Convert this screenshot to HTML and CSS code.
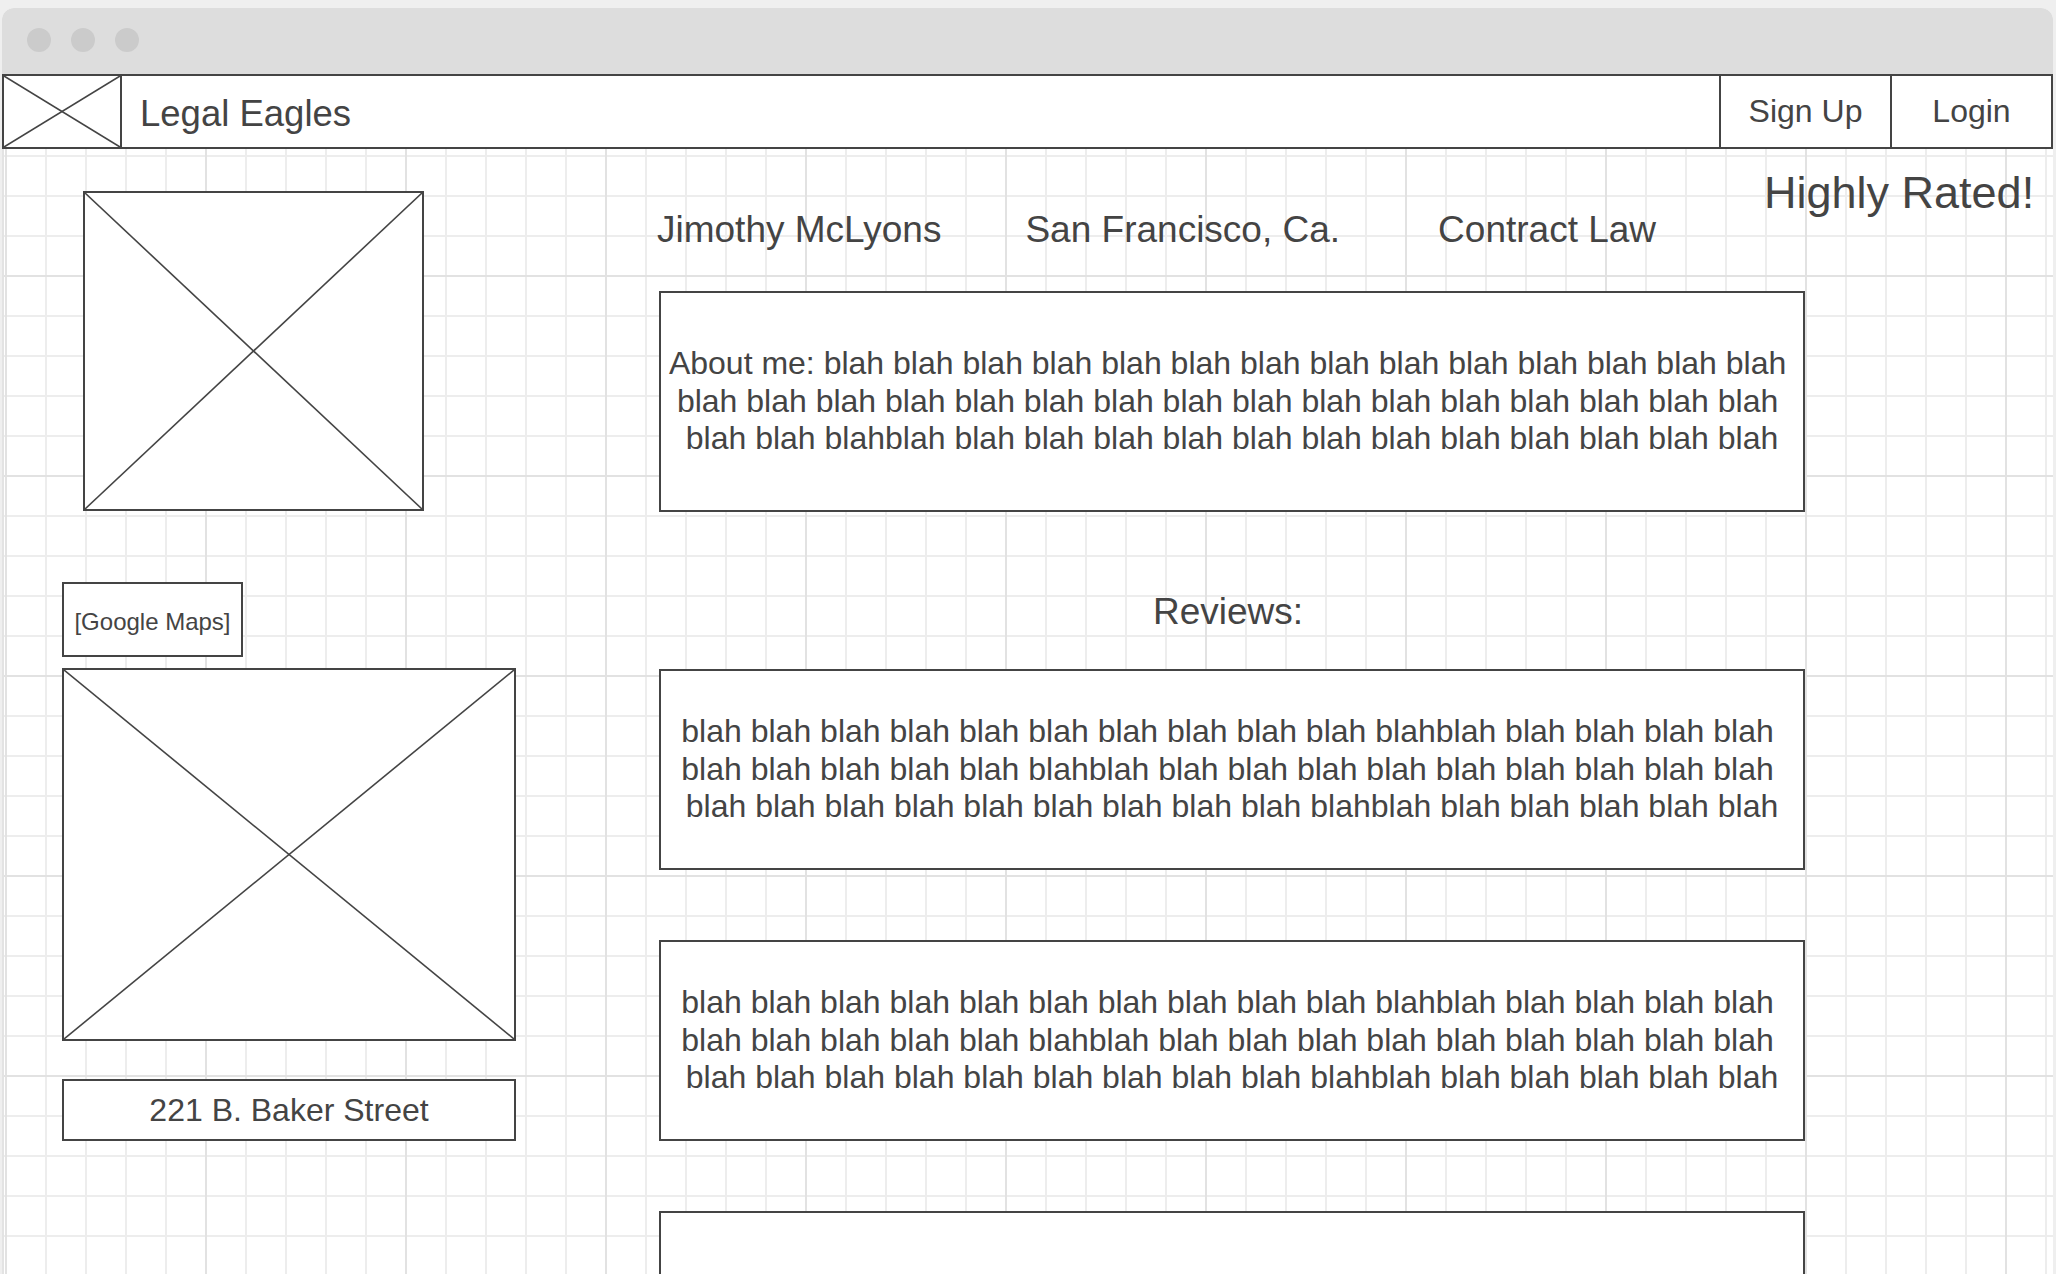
FILE: index.html
```html
<!DOCTYPE html>
<html lang="en">
<head>
    <meta charset="UTF-8">
    <meta name="viewport" content="width=device-width, initial-scale=1.0">
    <title>Legal Eagles - Jimothy McLyons</title>
    <link rel="stylesheet" href="styles.css">
</head>
<body>
    <div class="window">
        <div class="titlebar">
            <span class="dot"></span>
            <span class="dot"></span>
            <span class="dot"></span>
        </div>
        <header class="nav">
            <div class="logo">
                <svg class="cross" viewBox="0 0 100 100" preserveAspectRatio="none"><line x1="0" y1="0" x2="100" y2="100"/><line x1="100" y1="0" x2="0" y2="100"/></svg>
            </div>
            <div class="brand">Legal Eagles</div>
            <a class="nav-btn signup" href="#">Sign Up</a>
            <a class="nav-btn login" href="#">Login</a>
        </header>
        <main class="canvas">
            <aside class="side">
                <div class="box photo">
                    <svg class="cross" viewBox="0 0 100 100" preserveAspectRatio="none"><line x1="0" y1="0" x2="100" y2="100"/><line x1="100" y1="0" x2="0" y2="100"/></svg>
                </div>
                <div class="box maps-label">[Google Maps]</div>
                <div class="box map">
                    <svg class="cross" viewBox="0 0 100 100" preserveAspectRatio="none"><line x1="0" y1="0" x2="100" y2="100"/><line x1="100" y1="0" x2="0" y2="100"/></svg>
                </div>
                <div class="box address">221 B. Baker Street</div>
            </aside>

            <div class="facts">
                <span>Jimothy McLyons</span>
                <span>San Francisco, Ca.</span>
                <span class="practice">Contract Law</span>
            </div>

            <div class="rating">Highly Rated!</div>

            <section class="profile">
                <div class="box blurb">
                    <p>About me: blah blah blah blah blah blah blah blah blah blah blah blah blah blah blah blah blah blah blah blah blah blah blah blah blah blah blah blah blah blah blah blah blahblah blah blah blah blah blah blah blah blah blah blah blah blah</p>
                </div>

                <h2 class="reviews-title">Reviews:</h2>

                <div class="box blurb review">
                    <p>blah blah blah blah blah blah blah blah blah blah blahblah blah blah blah blah blah blah blah blah blah blahblah blah blah blah blah blah blah blah blah blah blah blah blah blah blah blah blah blah blah blahblah blah blah blah blah blah</p>
                </div>
                <div class="box blurb review">
                    <p>blah blah blah blah blah blah blah blah blah blah blahblah blah blah blah blah blah blah blah blah blah blahblah blah blah blah blah blah blah blah blah blah blah blah blah blah blah blah blah blah blah blahblah blah blah blah blah blah</p>
                </div>
                <div class="box blurb review"></div>
            </section>
        </main>
    </div>
</body>
</html>
```

FILE: styles.css
```css
* {
    box-sizing: border-box;
}

html, body {
    height: 100%;
}

body {
    margin: 0;
    padding: 8px 3px 0 2px;
    background: #efefef;
    font-family: "Liberation Sans", Arial, sans-serif;
    color: #444;
    overflow: hidden;
}

.window {
    height: 100%;
    display: flex;
    flex-direction: column;
    background: #fff;
    border-radius: 12px 12px 0 0;
}

.titlebar {
    flex: none;
    height: 66px;
    display: flex;
    align-items: center;
    gap: 20px;
    padding: 0 0 3px 25px;
    background: #dddddd;
    border-radius: 12px 12px 0 0;
}

.dot {
    width: 24px;
    height: 24px;
    border-radius: 50%;
    background: #cbcbcb;
}

.nav {
    flex: none;
    height: 75px;
    display: flex;
    border: 2px solid #444;
    background: #fff;
}

.logo {
    width: 118px;
    border-right: 2px solid #444;
}

.cross {
    display: block;
    width: 100%;
    height: 100%;
}

.cross line {
    stroke: #444;
    stroke-width: 1.6;
    vector-effect: non-scaling-stroke;
}

.brand {
    flex: 1;
    display: flex;
    align-items: center;
    padding: 4px 0 0 18px;
    font-size: 36.5px;
}

.nav-btn {
    display: flex;
    align-items: center;
    justify-content: center;
    border-left: 2px solid #444;
    font-size: 32px;
    color: #444;
    text-decoration: none;
}

.signup {
    width: 171px;
}

.login {
    width: 161px;
}

/* wireframe canvas with the grid paper behind it */
.canvas {
    flex: 1;
    min-height: 0;
    overflow: hidden;
    display: grid;
    grid-template-columns: 58px 454px 143px 1108px 38px 1fr;
    grid-template-rows: auto 1fr;
    align-items: start;
    padding-top: 19px;
    border-left: 2px solid #e3e3e3;
    background-color: #fff;
    background-image:
        linear-gradient(90deg, #e2e2e2 2px, transparent 2px),
        linear-gradient(180deg, #e2e2e2 2px, transparent 2px),
        linear-gradient(90deg, #ededed 2px, transparent 2px),
        linear-gradient(180deg, #ededed 2px, transparent 2px);
    background-size: 200px 200px, 200px 200px, 40px 40px, 40px 40px;
    background-position: 1px 0, 0 126px, 1px 0, 0 6px;
}

.box {
    border: 2px solid #444;
    background: #fff;
}

.side {
    grid-column: 2;
    grid-row: 1 / 3;
    display: flex;
    flex-direction: column;
    align-items: flex-start;
    padding-top: 23px;
}

.photo {
    margin-left: 21px;
    width: 341px;
    height: 320px;
}

.maps-label {
    margin-top: 71px;
    width: 181px;
    height: 75px;
    display: flex;
    align-items: center;
    justify-content: center;
    padding-top: 5px;
    font-size: 24px;
}

.map {
    margin-top: 11px;
    width: 454px;
    height: 373px;
}

.address {
    margin-top: 38px;
    width: 454px;
    height: 62px;
    display: flex;
    align-items: center;
    justify-content: center;
    font-size: 32px;
}

.facts {
    grid-column: 4 / 6;
    grid-row: 1;
    display: flex;
    gap: 84px;
    margin: 41px 0 0 -2px;
    font-size: 37px;
    line-height: 42px;
}

.practice {
    margin-left: 14px;
}

.rating {
    grid-column: 5 / 7;
    grid-row: 1;
    margin-left: -3px;
    font-size: 45px;
    line-height: 50px;
    white-space: nowrap;
}

.profile {
    grid-column: 4 / 6;
    grid-row: 2;
    display: flex;
    flex-direction: column;
    padding-top: 40px;
}

.blurb {
    height: 221px;
    display: flex;
    align-items: center;
    justify-content: center;
    padding: 0 4px;
    text-align: center;
    font-size: 32px;
    line-height: 37.5px;
}

.blurb p {
    margin: 0;
    white-space: break-spaces;
}

.reviews-title {
    margin: 79px 8px 36px 0;
    text-align: center;
    font-size: 37px;
    font-weight: normal;
    line-height: 42px;
}

.review {
    flex: none;
    height: 201px;
}

.review + .review {
    margin-top: 70px;
}
```
